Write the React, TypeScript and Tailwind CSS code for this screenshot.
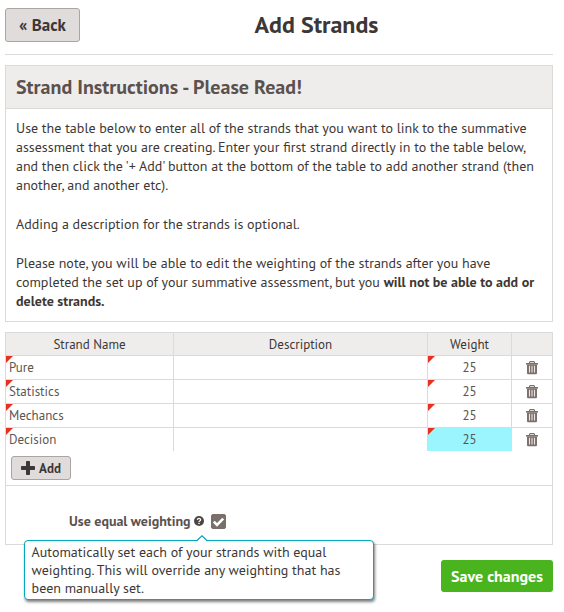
import { useState } from "react";

interface Strand {
  name: string;
  description: string;
  weight: number;
}

const initialStrands: Strand[] = [
  { name: "Pure", description: "", weight: 25 },
  { name: "Statistics", description: "", weight: 25 },
  { name: "Mechancs", description: "", weight: 25 },
  { name: "Decision", description: "", weight: 25 },
];

function TrashIcon() {
  return (
    <svg viewBox="0 0 12 14" className="h-[14px] w-[12px]" aria-hidden="true">
      <path d="M3.5 3V1.6Q3.5.7 4.4.7h3.2q.9 0 .9.9V3" fill="none" stroke="#7a6f6b" strokeWidth="1.2" />
      <rect x="0" y="2" width="12" height="1.6" fill="#7a6f6b" />
      <path d="M1 3.5h10v8.5q0 1.3-1.3 1.3H2.3Q1 13.3 1 12z" fill="#7a6f6b" />
      <path d="M3.5 4.8v6.8M6 4.8v6.8M8.5 4.8v6.8" stroke="#e9e6e4" strokeWidth="1.1" />
    </svg>
  );
}

function PlusIcon() {
  return (
    <svg viewBox="0 0 14 14" className="h-[14px] w-[14px]" aria-hidden="true">
      <path
        d="M5.8 0h2.4q.8 0 .8.8V5h4.2q.8 0 .8.8v2.4q0 .8-.8.8H9v4.2q0 .8-.8.8H5.8q-.8 0-.8-.8V9H.8Q0 9 0 8.2V5.8Q0 5 .8 5H5V.8Q5 0 5.8 0z"
        fill="#3d3735"
      />
    </svg>
  );
}

function HelpIcon() {
  return (
    <svg viewBox="0 0 10 10" className="h-[10px] w-[10px]" aria-hidden="true">
      <circle cx="5" cy="5" r="5" fill="#4c4542" />
      <path d="M3.4 3.9Q3.5 2.4 5 2.4t1.6 1.3Q6.6 4.5 5.7 5 5 5.4 5 6" fill="none" stroke="#fff" strokeWidth="1.3" />
      <rect x="4.3" y="6.8" width="1.4" height="1.3" fill="#fff" />
    </svg>
  );
}

// Red corner that marks a required cell
function RequiredMark() {
  return (
    <svg viewBox="0 0 7 7" className="absolute top-0 left-0 h-[7px] w-[7px]" aria-hidden="true">
      <path d="M0 0h7L0 7z" fill="#e8301f" />
    </svg>
  );
}

export default function App() {
  const [strands, setStrands] = useState<Strand[]>(initialStrands);
  const [equalWeighting, setEqualWeighting] = useState(true);

  const addStrand = () => {
    setStrands([...strands, { name: "", description: "", weight: 0 }]);
  };

  const removeStrand = (index: number) => {
    setStrands(strands.filter((_, i) => i !== index));
  };

  return (
    <div className="bg-white pt-2 pr-[11px] pb-5 pl-[5px] font-['PT_Sans','Noto_Sans',sans-serif] text-[14px] leading-[19px] text-[#3d3735]">
      <header className="flex items-center border-b border-[#dcd9d7] pb-3">
        <button
          type="button"
          className="h-[34px] w-[75px] shrink-0 rounded-[3px] border border-[#aaa4a2] bg-[#e0dcdb] text-[17px] font-bold"
        >
          « Back
        </button>
        <h1 className="flex-1 text-center text-[24px] leading-[34px] font-bold">Add Strands</h1>
      </header>

      <section className="mt-[10px] border border-[#dcd9d9]">
        <h2 className="border-b border-[#dcd9d9] bg-[#efedec] px-[10px] text-[20px] leading-[42px] font-bold text-[#5b514d]">
          Strand Instructions - Please Read!
        </h2>
        <div className="space-y-5 px-[10px] py-[10px]">
          <p>
            Use the table below to enter all of the strands that you want to link to the summative assessment that you
            are creating. Enter your first strand directly in to the table below, and then click the '+ Add' button at
            the bottom of the table to add another strand (then another, and another etc).
          </p>
          <p>Adding a description for the strands is optional.</p>
          <p>
            Please note, you will be able to edit the weighting of the strands after you have completed the set up of
            your summative assessment, but you <strong>will not be able to add or delete strands.</strong>
          </p>
        </div>
      </section>

      <section className="mt-[10px] border border-[#dcd9d9]">
        <table className="w-full table-fixed border-separate border-spacing-0 text-[13px] text-[#5b5653]">
          <colgroup>
            <col className="w-[168px]" />
            <col />
            <col className="w-[84px]" />
            <col className="w-[40px]" />
          </colgroup>
          <thead>
            <tr className="h-[23px] bg-[#efedec] text-[#3d3735]">
              <th className="border-r border-b border-[#dcd9d9] p-0 font-normal">Strand Name</th>
              <th className="border-r border-b border-[#dcd9d9] p-0 font-normal">Description</th>
              <th className="border-r border-b border-[#dcd9d9] p-0 font-normal">Weight</th>
              <th className="border-b border-[#dcd9d9] p-0" aria-label="Delete"></th>
            </tr>
          </thead>
          <tbody>
            {strands.map((strand, index) => (
              <tr key={index} className="group h-6 last:h-[23px]">
                <td className="relative border-r border-b border-[#dcd9d9] py-0 pr-1 pl-[3px] group-last:border-b-0">
                  <RequiredMark />
                  {strand.name}
                </td>
                <td className="border-r border-b border-[#dcd9d9] px-1 py-0 group-last:border-b-0">
                  {strand.description}
                </td>
                <td className="relative border-r border-b border-[#dcd9d9] p-0 text-center group-last:border-b-0 group-last:bg-[#9bf5ff]">
                  <RequiredMark />
                  {strand.weight}
                </td>
                <td className="border-b border-[#dcd9d9] p-0 group-last:border-b-0">
                  <button
                    type="button"
                    aria-label={`Delete ${strand.name}`}
                    onClick={() => removeStrand(index)}
                    className="mx-auto block"
                  >
                    <TrashIcon />
                  </button>
                </td>
              </tr>
            ))}
          </tbody>
        </table>

        <div className="border-b border-[#dcd9d9] px-[5px] py-[5px]">
          <button
            type="button"
            onClick={addStrand}
            className="flex h-6 w-[60px] items-center justify-center gap-1 rounded-[3px] border border-[#aaa4a2] bg-[#e0dcdb] text-[13px] font-bold"
          >
            <PlusIcon />
            Add
          </button>
        </div>

        <div className="flex h-[58px] items-center pt-3 pl-[63px]">
          <label htmlFor="equal-weighting" className="text-[14px] font-bold text-[#5b514d]">
            Use equal weighting
          </label>
          <span className="relative ml-[3px]">
            <HelpIcon />
            <span
              role="tooltip"
              className="absolute top-6 -right-[170px] w-[350px] rounded-[4px] border border-[#00a9bd] bg-white px-[7px] py-[2px] leading-[18px] shadow-[1px_2px_3px_rgba(0,0,0,0.5)]"
            >
              <svg viewBox="0 0 12 7" className="absolute -top-[6px] right-[165px] h-[7px] w-[12px]" aria-hidden="true">
                <path d="M0 7 6 1l6 6" fill="#fff" />
                <path d="M.5 6 6 .8 11.5 6" fill="none" stroke="#00a9bd" strokeWidth="1.2" />
              </svg>
              Automatically set each of your strands with equal weighting. This will override any weighting that has
              been manually set.
            </span>
          </span>
          <span className="relative ml-[7px] h-[15px] w-[15px]">
            <input
              id="equal-weighting"
              type="checkbox"
              checked={equalWeighting}
              onChange={(e) => setEqualWeighting(e.target.checked)}
              className="peer block h-[15px] w-[15px] appearance-none rounded-[2px] border border-[#7a6f6b] bg-white checked:bg-[#7a6f6b]"
            />
            <svg
              viewBox="0 0 15 15"
              className="pointer-events-none absolute inset-0 hidden peer-checked:block"
              aria-hidden="true"
            >
              <path d="M2.8 7.6 6 10.8l6.2-6.2" fill="none" stroke="#fff" strokeWidth="2.6" />
            </svg>
          </span>
        </div>
      </section>

      <div className="mt-[15px] flex justify-end">
        <button type="submit" className="h-8 w-[112px] rounded-[3px] bg-[#4ab41f] text-[16px] font-bold text-white">
          Save changes
        </button>
      </div>
    </div>
  );
}
